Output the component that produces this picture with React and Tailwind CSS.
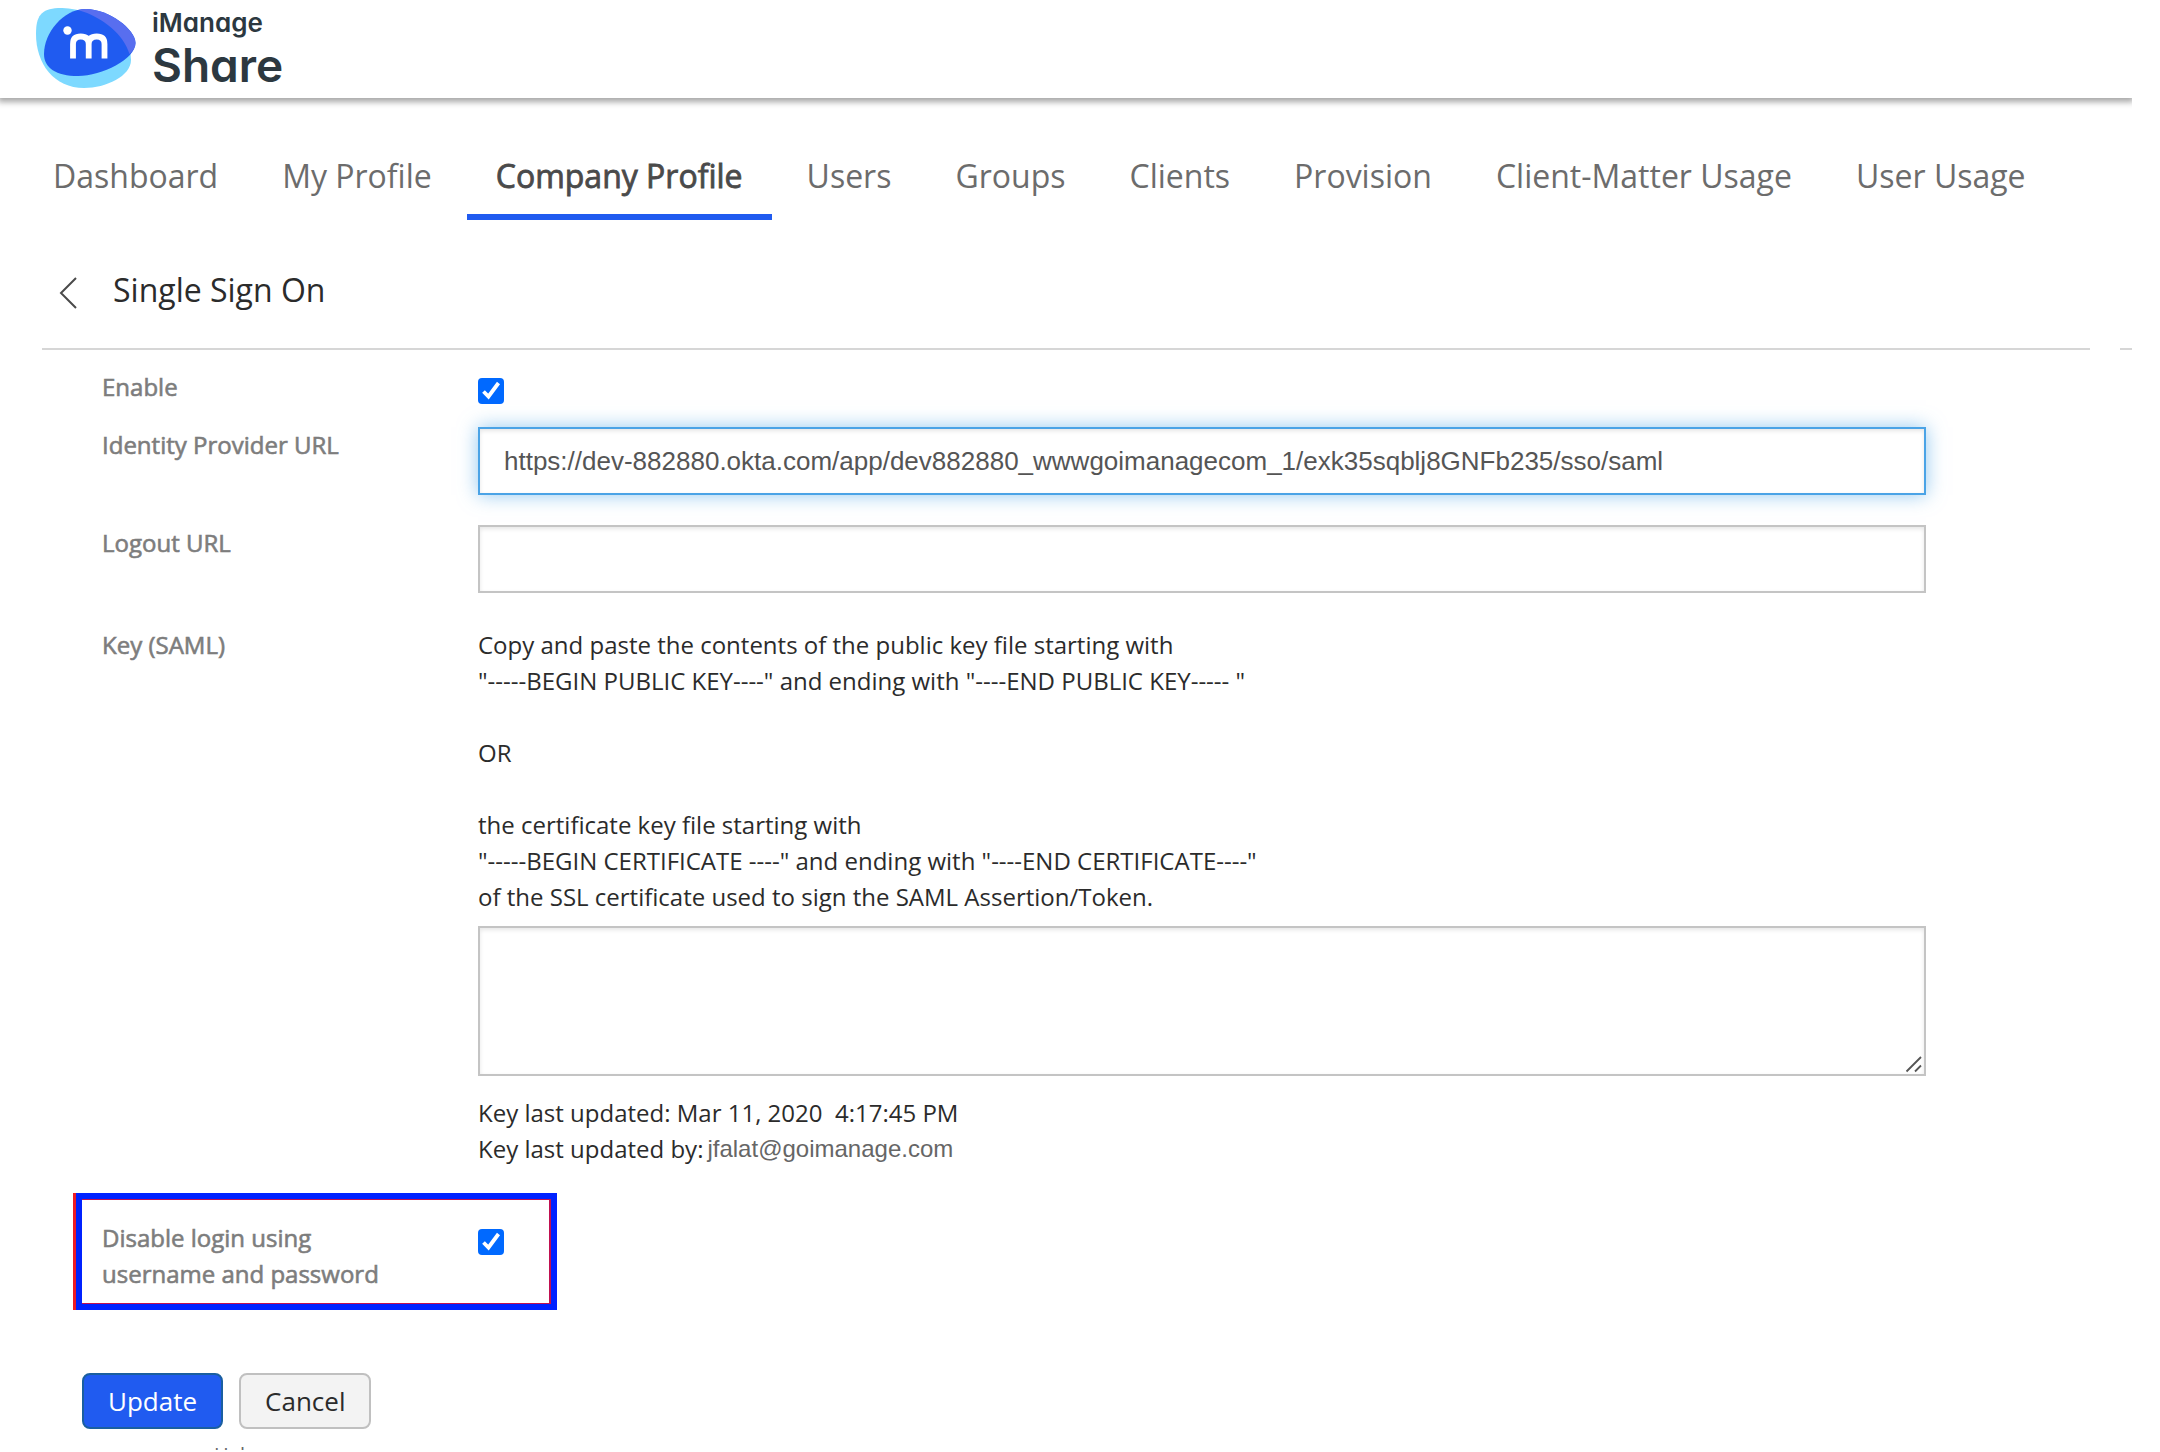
const tabs = [
  "Dashboard",
  "My Profile",
  "Company Profile",
  "Users",
  "Groups",
  "Clients",
  "Provision",
  "Client-Matter Usage",
  "User Usage",
];

function Logo() {
  return (
    <svg viewBox="0 0 100 82" className="h-[82px] w-[100px]" aria-hidden="true">
      <path
        d="M0 26C0 8 5 1 22 0C58 -1 95 24 95 52C95 68 70 80 48 80C18 80 0 56 0 26Z"
        fill="#7dd9ff"
      />
      <path
        d="M8 46C8 25 27 1 50 1C72 1 99.500 21 99.500 35C99.500 51 66 68 42 68C20 68 8 60 8 46Z"
        fill="#205bf0"
      />
      <path
        d="M42 2Q46 1 50 1C72 1 99.500 21 99.500 35C99.500 39 97 43 93.500 46C88 27 67 9 42 2Z"
        fill="#586eef"
      />
      <circle cx="31.500" cy="22.500" r="4.200" fill="#fff" />
      <path
        d="M37 50.500V36Q37 28.500 44.700 28.500Q52.700 28.500 52.700 36V50.500M52.700 36Q52.700 28.500 60.700 28.500Q68.500 28.500 68.500 36V50.500"
        fill="none"
        stroke="#fff"
        strokeWidth="5.800"
      />
    </svg>
  );
}

function Checkbox({ id }) {
  return (
    <span className="grid h-[26px] w-[26px]">
      <input
        id={id}
        type="checkbox"
        defaultChecked
        className="peer col-start-1 row-start-1 h-[26px] w-[26px] appearance-none rounded-[4px] border border-[#767676] checked:border-0 checked:bg-[#0069ff]"
      />
      <svg
        viewBox="0 0 26 26"
        className="pointer-events-none invisible col-start-1 row-start-1 h-[26px] w-[26px] peer-checked:visible"
        aria-hidden="true"
      >
        <path d="M5.500 13.500L10.500 18.500L20.500 5" fill="none" stroke="#fff" strokeWidth="3.800" />
      </svg>
    </span>
  );
}

const row = "grid grid-cols-[376px_minmax(0,1fr)] items-start";
const label = "leading-9 text-[#7d7d7d] [-webkit-text-stroke:0.6px_#7d7d7d]";
const control =
  "block w-full border-2 bg-white px-6 font-['Liberation_Sans',sans-serif] text-[26px] text-[#555] outline-none";
const plain = " border-[#c4c4c4] shadow-[inset_0_2px_4px_rgba(0,0,0,0.1)]";
const active =
  " border-[#4aa3e6] shadow-[inset_0_2px_4px_rgba(0,0,0,0.1),0_0_18px_rgba(74,163,230,0.6)]";

export default function App() {
  return (
    <div className="mr-7 h-[calc(100vh-2px)] overflow-hidden bg-white font-['Open_Sans',sans-serif] text-2xl text-[#2b2b2b]">
      <header className="flex h-[98px] items-start gap-4 pt-2 pl-9 shadow-[0_2px_6px_2px_rgba(0,0,0,0.35)]">
        <Logo />
        <div className="flex flex-col font-['Inter',sans-serif] font-semibold text-[#2c3840] [font-feature-settings:'cv11']">
          <span className="text-[26px] leading-[30px]">iManage</span>
          <span className="text-[46px] leading-[54px]">Share</span>
        </div>
      </header>

      <nav className="mt-11 flex gap-[6px] pl-6">
        {tabs.map((tab) => (
          <a
            key={tab}
            href="#"
            aria-current={tab === "Company Profile" ? "page" : undefined}
            className="border-b-[6px] border-transparent px-[29px] pt-[11px] pb-[15px] text-[32px] leading-[46px] whitespace-nowrap text-[#6c6c6c] aria-[current=page]:border-[#205bf0] aria-[current=page]:text-[#4a4a4a] aria-[current=page]:[-webkit-text-stroke:0.8px_#4a4a4a]"
          >
            {tab}
          </a>
        ))}
      </nav>

      <div className="flex gap-[30px] pl-[42px]">
        <div className="flex h-[130px] flex-1 items-center gap-8 border-b-2 border-[#d6d6d6] pt-3 pl-4">
          <button type="button" aria-label="Back" className="pt-1.5">
            <svg viewBox="0 0 23 34" className="h-[34px] w-[23px]" aria-hidden="true">
              <path d="M18 2L3 17L18 32" fill="none" stroke="#4a4a4a" strokeWidth="2" />
            </svg>
          </button>
          <h1 className="text-[32px] leading-[46px]">Single Sign On</h1>
        </div>
        <div className="w-3 border-b-2 border-[#d6d6d6]" />
      </div>

      <form className="pl-[73px]" onSubmit={(e) => e.preventDefault()}>
        <div className="pt-[19px] pr-[206px] pl-[29px]">
          <div className={row}>
            <label htmlFor="enable" className={label}>
              Enable
            </label>
            <div className="pt-[9px]">
              <Checkbox id="enable" />
            </div>
          </div>
          <div className={row + " mt-[22px]"}>
            <label htmlFor="idp" className={label}>
              Identity Provider URL
            </label>
            <input
              id="idp"
              type="text"
              defaultValue="https://dev-882880.okta.com/app/dev882880_wwwgoimanagecom_1/exk35sqblj8GNFb235/sso/saml"
              className={control + active + " h-[68px]"}
            />
          </div>
          <div className={row + " mt-[30px]"}>
            <label htmlFor="logout" className={label}>
              Logout URL
            </label>
            <input id="logout" type="text" className={control + plain + " h-[68px]"} />
          </div>
          <div className={row + " mt-[34px]"}>
            <label htmlFor="key" className={label}>
              Key (SAML)
            </label>
            <div className="leading-9">
              <p>
                Copy and paste the contents of the public key file starting with
                <br />
                "-----BEGIN PUBLIC KEY----" and ending with "----END PUBLIC KEY----- "
                <br />
                <br />
                OR
                <br />
                <br />
                the certificate key file starting with
                <br />
                "-----BEGIN CERTIFICATE ----" and ending with "----END CERTIFICATE----"
                <br />
                of the SSL certificate used to sign the SAML Assertion/Token.
              </p>
              <div className="relative mt-[11px]">
                <textarea id="key" className={control + plain + " h-[150px] resize-none"} />
                <svg
                  viewBox="0 0 18 18"
                  className="pointer-events-none absolute right-[3px] bottom-[3px] h-[18px] w-[18px]"
                  aria-hidden="true"
                >
                  <path d="M1.500 16.500L16 2M10 16.500L16 10.500" stroke="#555" strokeWidth="1.800" />
                </svg>
              </div>
              <p className="mt-[19px]">Key last updated: Mar 11, 2020&nbsp; 4:17:45 PM</p>
              <p className="flex gap-1">
                Key last updated by:
                <span className="font-['Liberation_Sans',sans-serif] text-[#666]">
                  jfalat@goimanage.com
                </span>
              </p>
            </div>
          </div>
        </div>

        <div className="mt-[26px] flex w-[484px] border-l-[3px] border-[#ee1c25]">
          <div className="flex-1 border-[6px] border-[#0022ff]">
            <div className="grid grid-cols-[376px_1fr] border-y border-r-2 border-[#c01050] pt-5 pb-[11px] pl-5">
              <label htmlFor="disable" className={label}>
                Disable login using
                <br />
                username and password
              </label>
              <div className="pt-[9px]">
                <Checkbox id="disable" />
              </div>
            </div>
          </div>
        </div>

        <div className="mt-[63px] flex gap-4 pl-[9px]">
          <button
            type="submit"
            className="h-14 rounded-lg border-2 border-[#1a5fa0] bg-[#205bf0] px-6 text-[26px] text-white"
          >
            Update
          </button>
          <button
            type="button"
            className="h-14 rounded-lg border-2 border-[#c0c0c0] bg-[#f3f3f3] px-6 text-[26px]"
          >
            Cancel
          </button>
        </div>
        <a href="#" className="mt-3 ml-[141px] block w-fit text-xl text-[#666]">
          Help
        </a>
      </form>
    </div>
  );
}
